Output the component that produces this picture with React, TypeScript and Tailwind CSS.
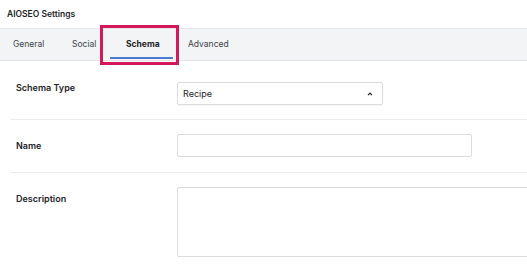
import React from "react";

export default function App() {
  return (
    <div
      className="w-[527px] h-[267px] overflow-hidden bg-white relative text-[#1d2327]"
      style={{ fontFamily: "Inter, 'Noto Sans', sans-serif" }}
    >
      <div className="h-[28px] flex items-center pl-[7px] text-[8.5px] font-semibold leading-none">
        AIOSEO Settings
      </div>
      <div className="h-[33px] bg-[#f3f4f5] border-y border-[#e4e5e7] flex items-center pl-[13px] text-[8.5px] text-[#3c434a] leading-none">
        <span className="w-[59px] shrink-0">General</span>
        <span className="w-[54px] shrink-0">Social</span>
        <span className="w-[62px] shrink-0 relative font-bold text-[#1d2327]">
          Schema
          <span className="absolute left-[-16px] w-[63px] top-[17px] h-[2px] bg-[#4a7bd0]" />
        </span>
        <span className="shrink-0">Advanced</span>
      </div>
      <div className="absolute left-[100px] top-[25px] w-[79px] h-[40px] border-[3px] border-[#d4185a]" />
      <div className="ml-[10px]">
        <div className="flex items-start pt-[21px] pb-[14px] border-b border-[#ececec]">
          <div className="w-[167px] shrink-0 pl-[6px] text-[9px] font-semibold leading-[12px]">Schema Type</div>
          <div className="w-[206px] shrink-0 h-[23px] border border-[#dcdcde] rounded-[2px] shadow-[0_1px_1px_rgba(0,0,0,0.04)] flex items-center justify-between pl-[5px] pr-[9px] text-[9px]">
            <span>Recipe</span>
            <svg width="6" height="4" viewBox="0 0 6 4" fill="none">
              <path d="M1 3.2 L3 1.2 L5 3.2" stroke="#1d2327" strokeWidth="1.2" />
            </svg>
          </div>
        </div>
        <div className="flex items-start pt-[14px] pb-[15px] border-b border-[#ececec]">
          <div className="w-[167px] shrink-0 pl-[6px] mt-[6px] text-[9px] font-semibold leading-[12px]">Name</div>
          <div className="w-[295px] shrink-0 h-[23px] border border-[#dcdcde] rounded-[2px]" />
        </div>
        <div className="flex items-start pt-[14px]">
          <div className="w-[167px] shrink-0 pl-[6px] mt-[6px] text-[9px] font-semibold leading-[12px]">Description</div>
          <div className="w-[400px] h-[70px] border border-[#dcdcde] rounded-[2px] shrink-0" />
        </div>
      </div>
    </div>
  );
}
